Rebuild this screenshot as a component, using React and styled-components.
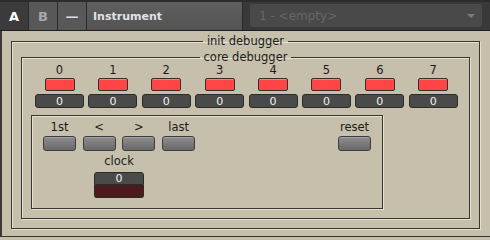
import React from "react";
import styled, { createGlobalStyle } from "styled-components";

const uiFont = "'DejaVu Sans', Verdana, sans-serif";

const GlobalStyle = createGlobalStyle`
  html, body {
    margin: 0;
    padding: 0;
    background: #c5bfab;
  }
  body {
    font-family: ${uiFont};
  }
`;

const Frame = styled.div`
  width: 490px;
  height: 240px;
  display: flex;
  flex-direction: column;
  background: #c5bfab;
  overflow: hidden;
`;

const Header = styled.div`
  box-sizing: border-box;
  height: 31px;
  display: flex;
  align-items: stretch;
  padding-top: 2px;
  background: #2c2c2c;
  border-bottom: 1px solid #1f1f1f;
`;

const Tab = styled.div`
  width: 28px;
  display: flex;
  align-items: center;
  justify-content: center;
  border-right: 1px solid #2a2a2a;
  background: ${p => (p.$active ? "#3b3b3b" : "#585858")};
  color: ${p => p.$color || (p.$active ? "#ffffff" : "#a9a9a9")};
  font-size: 13px;
  font-weight: bold;
`;

const NameField = styled.div`
  width: 149px;
  display: flex;
  align-items: center;
  padding-left: 6px;
  border-right: 1px solid #2a2a2a;
  background: linear-gradient(#5f5f5f, #535353);
  color: #e2e2e2;
  font-size: 11px;
  font-weight: bold;
`;

const SelectArea = styled.div`
  flex: 1;
  display: flex;
  padding: 2px 8px 3px 7px;
  background: #393939;
`;

const Select = styled.div`
  flex: 1;
  display: flex;
  align-items: center;
  justify-content: space-between;
  padding: 0 7px 0 9px;
  border-radius: 2px;
  background: #494949;
  color: #676767;
  font-size: 12px;
`;

const Caret = styled.span`
  width: 0;
  height: 0;
  border-left: 4px solid transparent;
  border-right: 4px solid transparent;
  border-top: 4px solid #7a7a7a;
`;

const Panel = styled.div`
  box-sizing: border-box;
  height: 206px;
  padding: 4px 10px 0 9px;
  border-left: 2px solid #3a3935;
  border-bottom: 1px solid #34332f;
`;

const Group = styled.fieldset`
  margin: 0;
  min-inline-size: 0;
  padding: ${p => p.$pad || "4px 9px 9px 9px"};
  border: 1px solid #36352f;
  box-shadow: 1px 1px 0 #e6e1cf, inset 1px 1px 0 #e6e1cf;
`;

const Title = styled.legend`
  margin: 0 auto;
  padding: 0 4px;
  height: 12px;
  line-height: 12px;
  font-size: 11.5px;
  color: #1b1b1b;
`;

const Channels = styled.div`
  display: grid;
  grid-template-columns: repeat(8, 49px);
  column-gap: 4.4px;
  margin: 1px 0 0 4px;
`;

const Channel = styled.div`
  display: flex;
  flex-direction: column;
  align-items: center;
`;

const Label = styled.div`
  height: 13px;
  line-height: 13px;
  font-size: 11.5px;
  color: #1b1b1b;
  text-align: center;
  white-space: nowrap;
`;

const LedButton = styled.div`
  box-sizing: border-box;
  width: 30px;
  height: 13px;
  margin-top: 1px;
  border: 1px solid #3b2b2b;
  border-radius: 2px;
  background: #ff4545;
  box-shadow: inset 0 1px 0 #ff7a7a;
`;

const Display = styled.div`
  box-sizing: border-box;
  width: ${p => p.$w || 49}px;
  height: ${p => p.$h || 14}px;
  margin-top: ${p => p.$mt ?? 2}px;
  display: flex;
  align-items: center;
  justify-content: center;
  border: 1px solid #2b2b2b;
  border-radius: ${p => p.$radius || "3px"};
  background: #4a4a4a;
  color: #f2f2f2;
  font-size: 11px;
`;

const Inner = styled.div`
  box-sizing: border-box;
  width: 352px;
  height: 94px;
  margin-top: 7px;
  padding: 5px 11px 0 11px;
  display: flex;
  justify-content: space-between;
  border: 1px solid #36352f;
  box-shadow: 1px 1px 0 #e6e1cf, inset 1px 1px 0 #e6e1cf;
`;

const Transport = styled.div`
  display: flex;
  flex-direction: column;
  align-items: center;
`;

const ButtonRow = styled.div`
  display: flex;
  gap: 6.7px;
`;

const Control = styled.div`
  display: flex;
  flex-direction: column;
  align-items: center;
  gap: 2px;
`;

const Button = styled.div`
  box-sizing: border-box;
  width: 33px;
  height: 15px;
  border: 1px solid #3c3c3c;
  border-radius: 3px;
  background: linear-gradient(#8d8d8d, #696969);
  box-shadow: inset 0 1px 0 #a3a3a3;
`;

const Clock = styled.div`
  margin-top: 4px;
  display: flex;
  flex-direction: column;
  align-items: center;
`;

const ClockStack = styled.div`
  margin-top: 4px;
  display: flex;
  flex-direction: column;
`;

const ClockLed = styled.div`
  box-sizing: border-box;
  width: 50px;
  height: 13px;
  border: 1px solid #2b2b2b;
  border-top: none;
  border-radius: 0 0 3px 3px;
  background: #4b1a1a;
`;

const channels = [0, 1, 2, 3, 4, 5, 6, 7];
const transport = ["1st", "<", ">", "last"];

export default function App() {
  return (
    <>
      <GlobalStyle />
      <Frame>
        <Header>
          <Tab $active>A</Tab>
          <Tab>B</Tab>
          <Tab $color="#dedede">—</Tab>
          <NameField>Instrument</NameField>
          <SelectArea>
            <Select>
              <span>1 - &lt;empty&gt;</span>
              <Caret />
            </Select>
          </SelectArea>
        </Header>
        <Panel>
          <Group>
            <Title>init debugger</Title>
            <Group $pad="0 9px 9px 9px">
              <Title>core debugger</Title>
              <Channels>
                {channels.map(n => (
                  <Channel key={n}>
                    <Label>{n}</Label>
                    <LedButton />
                    <Display $mt={3}>0</Display>
                  </Channel>
                ))}
              </Channels>
              <Inner>
                <Transport>
                  <ButtonRow>
                    {transport.map(t => (
                      <Control key={t}>
                        <Label>{t}</Label>
                        <Button />
                      </Control>
                    ))}
                  </ButtonRow>
                  <Clock>
                    <Label>clock</Label>
                    <ClockStack>
                      <Display $w={50} $h={13} $mt={0} $radius="3px 3px 0 0">
                        0
                      </Display>
                      <ClockLed />
                    </ClockStack>
                  </Clock>
                </Transport>
                <Control>
                  <Label>reset</Label>
                  <Button />
                </Control>
              </Inner>
            </Group>
          </Group>
        </Panel>
      </Frame>
    </>
  );
}
